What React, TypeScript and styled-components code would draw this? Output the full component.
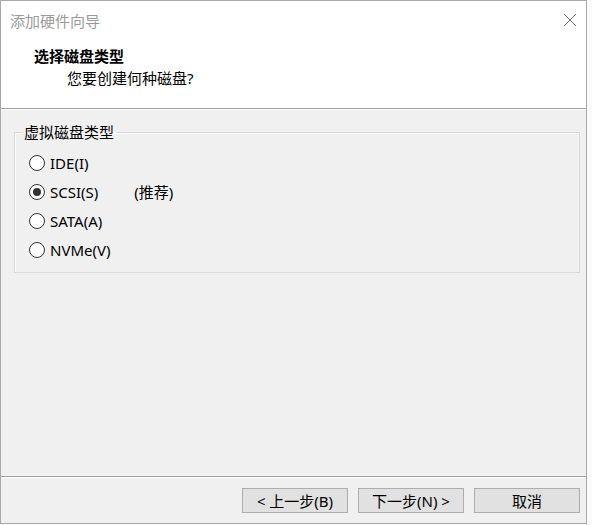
import React, { useState } from 'react';
import styled, { createGlobalStyle } from 'styled-components';

const GlobalStyle = createGlobalStyle`
  *, *::before, *::after {
    box-sizing: border-box;
  }
  html, body {
    margin: 0;
    padding: 0;
    background: #fafafa;
  }
  body {
    font-family: "Noto Sans", "Noto Sans CJK SC", "Microsoft YaHei", sans-serif;
    font-size: 15px;
    color: #000;
  }
`;

const Window = styled.div`
  width: 587px;
  height: 524px;
  border: 1px solid #a9a9a9;
  display: flex;
  flex-direction: column;
  background: #f0f0f0;
`;

const TitleBar = styled.div`
  height: 38px;
  display: flex;
  align-items: center;
  justify-content: space-between;
  padding: 0 1px 0 9px;
  background: #fff;
  color: #9a9a9a;
  font-size: 15px;
`;

const CloseButton = styled.button`
  width: 30px;
  height: 30px;
  border: none;
  background: transparent;
  display: flex;
  align-items: center;
  justify-content: center;
  padding: 0;
`;

const Header = styled.div`
  height: 70px;
  background: #fff;
  padding: 7px 0 0 33px;
  border-bottom: 1px solid #a0a0a0;
  box-shadow: 0 1px 0 #fff;
`;

const HeaderTitle = styled.div`
  font-weight: 700;
  line-height: 20px;
  font-size: 15px;
`;

const HeaderSub = styled.div`
  line-height: 20px;
  margin-top: 2px;
  padding-left: 33px;
`;

const Content = styled.div`
  flex: 1;
  padding: 14px 8px 0 13px;
`;

const Group = styled.fieldset`
  margin: 0;
  padding: 7px 0 8px 14px;
  border: 1px solid #d9d9d9;
  box-shadow: inset 1px 1px 0 #fff;
  width: 566px;
`;

const Legend = styled.legend`
  padding: 0 2px;
  margin-left: -7px;
  line-height: 18px;
`;

const Row = styled.label`
  height: 29px;
  display: flex;
  align-items: center;
  cursor: default;
`;

const Radio = styled.span<{ $checked: boolean }>`
  width: 16px;
  height: 16px;
  border-radius: 50%;
  border: 1px solid #333;
  background: #fff;
  margin-right: 5px;
  display: flex;
  align-items: center;
  justify-content: center;
  &::after {
    content: '';
    width: 8px;
    height: 8px;
    border-radius: 50%;
    background: ${(p) => (p.$checked ? '#333' : 'transparent')};
  }
`;

const Hint = styled.span`
  margin-left: 36px;
`;

const Footer = styled.div`
  height: 47px;
  border-top: 1px solid #a0a0a0;
  box-shadow: inset 0 1px 0 #fff;
  display: flex;
  justify-content: flex-end;
  align-items: flex-start;
  gap: 10px;
  padding: 11px 6px 0 0;
`;

const Button = styled.button`
  width: 106px;
  height: 25px;
  border: 1px solid #adadad;
  background: #e1e1e1;
  font-family: inherit;
  font-size: 15px;
  color: #000;
  padding: 0;
  line-height: 22px;
`;

const options = [
  { key: 'ide', label: 'IDE(I)' },
  { key: 'scsi', label: 'SCSI(S)', hint: '(推荐)' },
  { key: 'sata', label: 'SATA(A)' },
  { key: 'nvme', label: 'NVMe(V)' },
];

export default function App() {
  const [selected, setSelected] = useState('scsi');

  return (
    <>
      <GlobalStyle />
      <Window>
        <TitleBar>
          <span>添加硬件向导</span>
          <CloseButton aria-label="关闭">
            <svg width="14" height="14" viewBox="0 0 14 14">
              <path d="M1 1L13 13M13 1L1 13" stroke="#6f6f6f" strokeWidth="1" fill="none" />
            </svg>
          </CloseButton>
        </TitleBar>
        <Header>
          <HeaderTitle>选择磁盘类型</HeaderTitle>
          <HeaderSub>您要创建何种磁盘?</HeaderSub>
        </Header>
        <Content>
          <Group>
            <Legend>虚拟磁盘类型</Legend>
            {options.map((o) => (
              <Row key={o.key} onClick={() => setSelected(o.key)}>
                <Radio $checked={selected === o.key} />
                <span>{o.label}</span>
                {o.hint && <Hint>{o.hint}</Hint>}
              </Row>
            ))}
          </Group>
        </Content>
        <Footer>
          <Button>&lt; 上一步(B)</Button>
          <Button>下一步(N) &gt;</Button>
          <Button>取消</Button>
        </Footer>
      </Window>
    </>
  );
}
